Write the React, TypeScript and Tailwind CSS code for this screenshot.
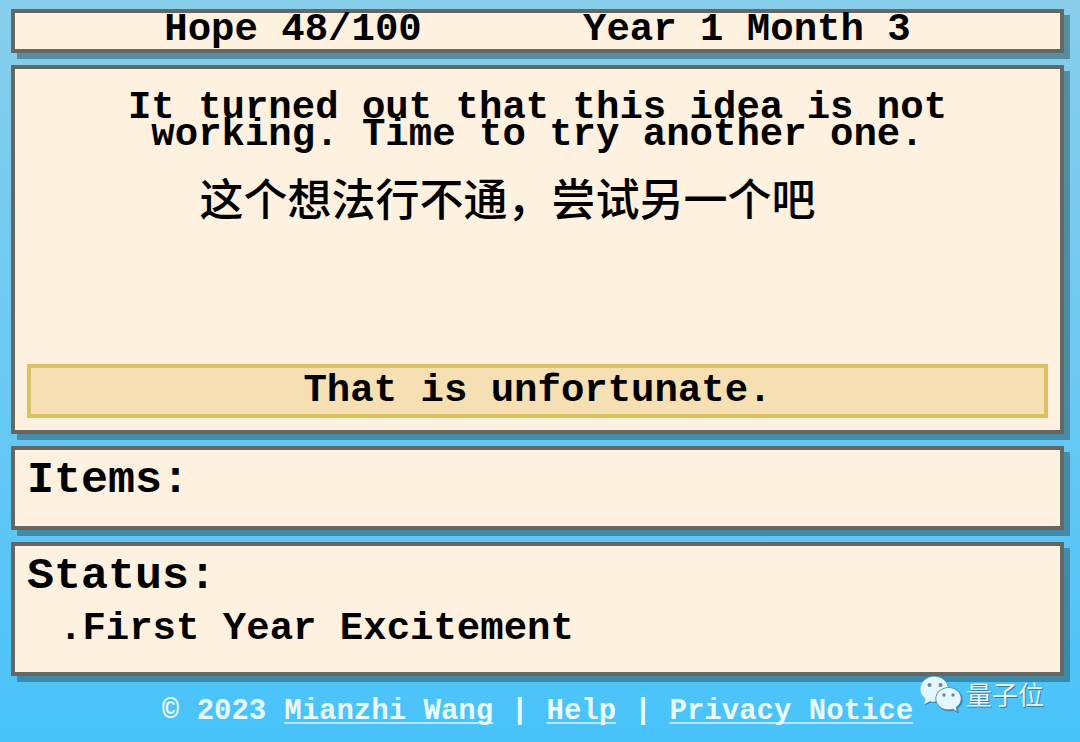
import type { ReactNode } from "react";

function Panel({
  children,
  className = "",
}: {
  children: ReactNode;
  className?: string;
}) {
  return (
    <section
      className={`border-4 border-[#656763] bg-[#fff1e0] shadow-[6px_6px_0px_0px_rgba(40,80,90,0.5)] ${className}`}
    >
      {children}
    </section>
  );
}

function FooterLink({ href, children }: { href: string; children: ReactNode }) {
  return (
    <a
      href={href}
      className="underline decoration-[#b4e9fb] decoration-2 underline-offset-3 [text-decoration-skip-ink:none] hover:opacity-75"
    >
      {children}
    </a>
  );
}

function Watermark() {
  return (
    <div className="pointer-events-none absolute right-9 bottom-[30px] flex items-center gap-1 text-[#e4f6fe]">
      <svg
        viewBox="0 0 42 36"
        className="h-9 w-[42px] drop-shadow-[1px_1px_0px_rgba(40,90,120,0.7)]"
        aria-hidden="true"
      >
        <path
          d="M14 0.500C6.500 0.500 0.500 6.200 0.500 13.200c0 4 1.900 7.400 5 9.700L4.300 28.300l5.900-3.100c1.500.4 2.800.5 4.300.5l1.500-.1c-1.800-7.500 4-14.200 12.100-13.900C27 5 21.500 .5 14 .5Z"
          fill="currentColor"
        />
        <path
          d="M28.500 11.500C21.500 11.500 15.800 16.500 15.800 22.700S21.500 33.800 28.500 33.800c1.500 0 2.900-.2 4.200-.6l4.800 2.500-1.300-4.500c3.200-2 5-5 5-8.500C41.200 16.500 35.500 11.500 28.500 11.500Z"
          fill="currentColor"
          stroke="#5c8798"
          strokeWidth="0.8"
        />
        <circle cx="9.500" cy="9" r="2" fill="#64899a" />
        <circle cx="20.500" cy="9" r="2" fill="#64899a" />
        <circle cx="24" cy="19" r="1.700" fill="#64899a" />
        <circle cx="33" cy="19" r="1.700" fill="#64899a" />
      </svg>
      <span className="font-['Noto_Sans_CJK_SC',sans-serif] text-[26px] leading-8 font-normal [text-shadow:1px_1px_0px_rgba(40,90,120,0.7)]">
        量子位
      </span>
    </div>
  );
}

export default function App() {
  return (
    <div className="relative flex min-h-screen flex-col gap-3 bg-linear-to-b from-[#87ceeb] to-[#47c3fa] pt-[9px] pr-4 pl-[11px] font-['Liberation_Mono',monospace] text-[39px] leading-[27px] font-bold text-black">
      <Panel className="flex flex-wrap justify-evenly gap-x-3 pt-px pb-[3px] leading-8">
        <span>Hope 48/100</span>
        <span>Year 1 Month 3</span>
      </Panel>

      <Panel className="flex min-h-[369px] flex-col p-3">
        <p className="mx-auto mt-3.5 max-w-[840px] text-center">
          It turned out that this idea is not working. Time to try another one.
        </p>
        <p
          lang="zh-CN"
          className="mt-4.5 mb-4 mr-15 text-center font-['Noto_Sans_CJK_SC',sans-serif] text-[44px] leading-[60px] font-medium"
        >
          这个想法行不通，尝试另一个吧
        </p>
        <button
          type="button"
          className="mt-auto cursor-pointer border-4 border-[#dac262] bg-[#f5dfb3] py-1.5 leading-[34px] hover:bg-[#f0d59c]"
        >
          That is unfortunate.
        </button>
      </Panel>

      <Panel className="min-h-[84px] px-3 py-2.5">
        <h2 className="text-[45px] leading-[42px]">Items:</h2>
      </Panel>

      <Panel className="min-h-[134px] px-3 py-2.5">
        <h2 className="text-[45px] leading-[42px]">Status:</h2>
        <ul className="mt-3.5 ml-8">
          <li className="leading-[34px]">.First Year Excitement</li>
        </ul>
      </Panel>

      <footer className="flex flex-wrap justify-center gap-x-[18px] pt-2 text-[29px] leading-8 text-[#e9fbff]">
        <span>© 2023</span>
        <FooterLink href="#author">Mianzhi Wang</FooterLink>
        <span>|</span>
        <FooterLink href="#help">Help</FooterLink>
        <span>|</span>
        <FooterLink href="#privacy">Privacy Notice</FooterLink>
      </footer>

      <Watermark />
    </div>
  );
}
